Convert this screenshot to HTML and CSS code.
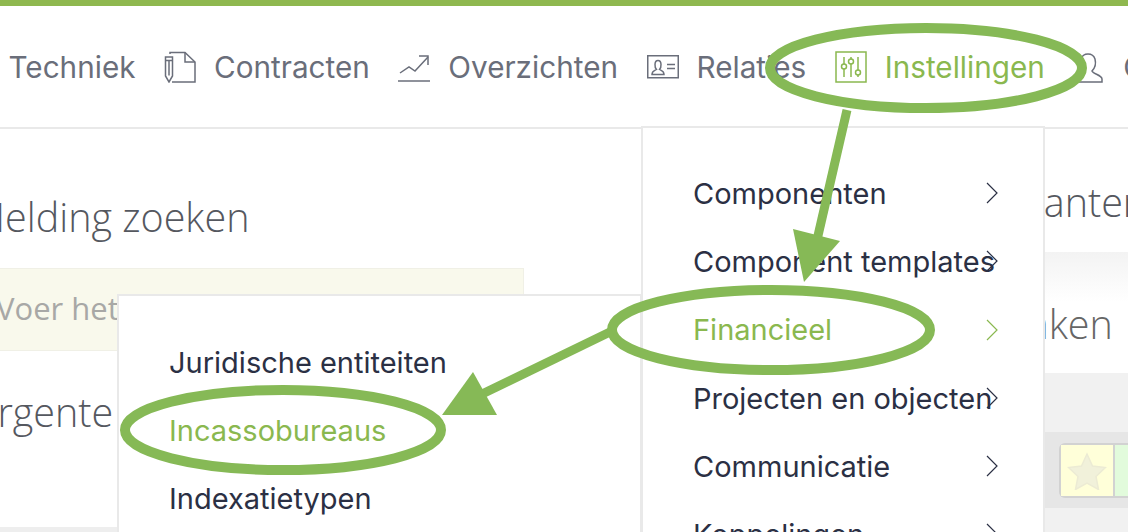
FILE: index.html
```html
<!DOCTYPE html>
<html lang="nl">
<head>
  <meta charset="UTF-8">
  <title>Instellingen</title>
  <link rel="stylesheet" href="styles.css">
</head>
<body>
  <div class="page">
    <nav class="topnav">
      <a class="nav-item">Techniek</a>
      <a class="nav-item">
        <svg class="nav-icon" viewBox="0 0 32 32" width="32" height="32"><path d="M6 3V1.500h15L31 11v20H8" /><path d="M21 1.500V11h10" /><path d="M1.500 6h7v19l-3.500 6-3.500-6z" /><path d="M1.500 9.500h7M5 9.500v15" /></svg>
        Contracten
      </a>
      <a class="nav-item">
        <svg class="nav-icon" viewBox="0 0 32 32" width="32" height="32"><path d="M2 22l9-6 6 4L30 6" /><path d="M21 5h9v9" /><path d="M0 30h32" /></svg>
        Overzichten
      </a>
      <a class="nav-item">
        <svg class="nav-icon" viewBox="0 0 32 24" width="32" height="24"><rect x="0.750" y="0.750" width="30.500" height="22" /><path d="M5 19.500c0-4 3-4 4.500-5-2-2-2.500-9 1.500-9s3.500 7 1.500 9c1.500 1 4.500 1 4.500 5z" /><path d="M20 9.500h8M20 13.500h8" /></svg>
        Relaties
      </a>
      <a class="nav-item nav-active">
        <svg class="nav-icon" viewBox="0 0 32 32" width="32" height="32"><rect x="1" y="1" width="30" height="30" /><path d="M9 6v7M9 18v8M16 6v2M16 13v13M23 6v13M23 24v2" /><circle cx="9" cy="15.500" r="2.500" /><circle cx="16" cy="10.500" r="2.500" /><circle cx="23" cy="21.500" r="2.500" /></svg>
        Instellingen
      </a>
      <a class="nav-item">
        <svg class="nav-icon" viewBox="0 0 32 32" width="32" height="32"><path d="M1 31v-3c0-4 9-5 10-8-3-3-4-8-3-12 1-3 4-5 7-5s6 2 7 5c1 4 0 9-3 12 1 3 10 4 10 8v3z" /></svg>
        Contacten
      </a>
    </nav>

    <main class="content">
      <section class="col-left">
        <h2 class="panel-title title-search">Melding zoeken</h2>
        <div class="search-box">Voer het meldingnummer in</div>
        <h2 class="panel-title title-urgent">Urgente meldingen</h2>
        <div class="foot"></div>
      </section>
      <section class="col-middle"></section>
      <section class="col-right">
        <h2 class="panel-title title-plan">Geplanter</h2>
        <div class="band-fade"></div>
        <h2 class="panel-title title-tasks">Taken</h2>
        <div class="band"></div>
        <div class="band-tools">
          <div class="btn-group">
            <span class="tool tool-star">
              <svg viewBox="0 0 40 38" width="40" height="38"><path d="M20 2l5.500 12 13 1.500-9.500 9 2.500 13L20 31 8.500 37.500l2.500-13-9.500-9 13-1.500z" /></svg>
            </span>
            <span class="tool tool-pin"></span>
          </div>
        </div>
        <div class="band"></div>
      </section>
    </main>

    <div class="menu menu-main">
      <a class="menu-item">Componenten<svg class="chev" viewBox="0 0 14 22" width="14" height="22"><path d="M2 1l10 10L2 21" /></svg></a>
      <a class="menu-item">Component templates<svg class="chev" viewBox="0 0 14 22" width="14" height="22"><path d="M2 1l10 10L2 21" /></svg></a>
      <a class="menu-item menu-active">Financieel<svg class="chev" viewBox="0 0 14 22" width="14" height="22"><path d="M2 1l10 10L2 21" /></svg></a>
      <a class="menu-item">Projecten en objecten<svg class="chev" viewBox="0 0 14 22" width="14" height="22"><path d="M2 1l10 10L2 21" /></svg></a>
      <a class="menu-item">Communicatie<svg class="chev" viewBox="0 0 14 22" width="14" height="22"><path d="M2 1l10 10L2 21" /></svg></a>
      <a class="menu-item">Koppelingen<svg class="chev" viewBox="0 0 14 22" width="14" height="22"><path d="M2 1l10 10L2 21" /></svg></a>
    </div>

    <div class="menu menu-sub">
      <a class="menu-item">Juridische entiteiten</a>
      <a class="menu-item menu-active">Incassobureaus</a>
      <a class="menu-item">Indexatietypen</a>
    </div>

    <svg class="marks" viewBox="0 0 1128 532" width="1128" height="532">
      <ellipse cx="926" cy="68" rx="156" ry="40" />
      <ellipse cx="771" cy="330" rx="159" ry="40" />
      <ellipse cx="283" cy="430" rx="158" ry="40" />
      <path d="M847 110L817 240" />
      <path d="M612 331L478 396" />
      <polygon points="793,229 840,241 804,282" />
      <polygon points="442,415 473,372 497,415" />
    </svg>
  </div>
</body>
</html>
```

FILE: styles.css
```css
* {
  box-sizing: border-box;
}

body {
  margin: 0;
  font-family: Inter, "Noto Sans", sans-serif;
  background: #fff;
}

.page {
  position: relative;
  width: 1128px;
  height: 532px;
  overflow: hidden;
  display: flex;
  flex-direction: column;
}

.topnav {
  display: flex;
  align-items: center;
  gap: 28.500px;
  height: 129px;
  padding-left: 8.500px;
  border-top: 6px solid #8fb84f;
  border-bottom: 2px solid #e9e9e9;
  white-space: nowrap;
  flex-shrink: 0;
}

.nav-item {
  display: flex;
  align-items: center;
  gap: 18px;
  font-size: 29.700px;
  color: #6a6e7a;
}

.nav-icon {
  fill: none;
  stroke: #6a6e7a;
  stroke-width: 1.500;
  flex-shrink: 0;
}

.nav-active {
  color: #8ab84f;
}

.nav-active .nav-icon {
  stroke: #8ab84f;
}

.content {
  flex: 1;
  display: flex;
  min-height: 0;
  background: #fff;
}

.col-left {
  width: 524px;
  overflow: hidden;
}

.col-middle {
  flex: 1;
}

.col-right {
  width: 84px;
  background: #fff;
  overflow: hidden;
}

.panel-title {
  margin: 0;
  font-family: "Open Sans", sans-serif;
  font-weight: 300;
  font-size: 39.500px;
  color: #55585f;
  white-space: nowrap;
}

.title-search {
  height: 139px;
  padding-top: 61px;
  margin-left: -29px;
}

.search-box {
  height: 83px;
  padding: 18px 0 0 8px;
  margin-left: -13px;
  background: #f9f9ec;
  border: 1px solid #f0f0e6;
  font-family: "Open Sans", sans-serif;
  font-size: 31px;
  color: #a8a8a6;
  white-space: nowrap;
}

.title-urgent {
  height: 176px;
  margin-left: -31px;
  padding-top: 34px;
}

.foot {
  height: 10px;
  background: #eee;
}

.title-plan {
  margin-left: -83px;
  height: 123px;
  padding-top: 46px;
}

.band-fade {
  height: 50px;
  background: linear-gradient(#f3f3f3, #fff);
}

.title-tasks {
  margin-left: -37px;
  height: 71px;
  line-height: 1.150;
  color: #666;
}

.band {
  background: #f1f1f1;
  height: 59px;
}

.band-tools {
  height: 76px;
  padding: 11px 0 0 15px;
  background: #e6e6e6;
}

.btn-group {
  display: flex;
  gap: 2px;
  height: 55px;
  width: 120px;
  padding: 2px;
  background: #d2d2d2;
  border-radius: 6px;
}

.tool {
  display: flex;
  align-items: center;
  justify-content: center;
  height: 51px;
  width: 52px;
  background: #ffffd9;
}

.tool-star svg {
  fill: #f1f1da;
  stroke: #ecebd4;
  stroke-width: 1.500;
}

.tool-pin {
  background: #e2fbdc;
}

.menu {
  position: absolute;
  background: #fff;
  border: 2px solid #e9e9e9;
  display: flex;
  flex-direction: column;
}

.menu-main {
  left: 641px;
  top: 126px;
  width: 404px;
  height: 440px;
  padding: 31px 0 0 50px;
}

.menu-sub {
  left: 117px;
  top: 294px;
  width: 525px;
  height: 260px;
  padding: 32px 0 0 50px;
}

.menu-item {
  position: relative;
  display: flex;
  align-items: center;
  flex-shrink: 0;
  height: 68.300px;
  font-size: 29px;
  color: #2b3044;
  white-space: nowrap;
}

.menu-active {
  color: #8ab84f;
}

.chev {
  position: absolute;
  left: 292px;
  top: 23px;
  fill: none;
  stroke: #2b3044;
  stroke-width: 1.200;
}

.menu-active .chev {
  stroke: #8ab84f;
}

.marks {
  position: absolute;
  left: 0;
  top: 0;
  pointer-events: none;
}

.marks ellipse {
  fill: none;
  stroke: #86b956;
  stroke-width: 10;
}

.marks path {
  fill: none;
  stroke: #86b956;
  stroke-width: 9;
}

.marks polygon {
  fill: #86b956;
}
```
